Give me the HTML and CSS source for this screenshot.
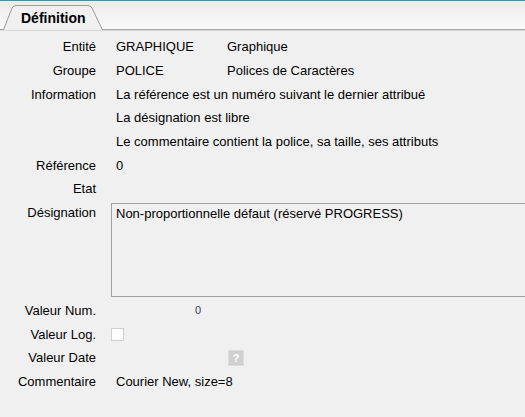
FILE: index.html
```html
<!DOCTYPE html>
<html lang="fr">
<head>
  <meta charset="UTF-8" />
  <title>Définition</title>
  <link rel="stylesheet" href="styles.css">
</head>
<body>
  <div class="tabs">
    <div class="tab">
      <svg class="tab-shape" width="104" height="26" viewBox="0 0 104 26">
        <path d="M2.5 26 L11 4 Q12.5 1.5 15 1.5 L87 1.5 Q89.5 1.5 91 4 L101.5 26" fill="#f0f0f0" stroke="#9a9a9a" stroke-width="1"/>
      </svg>
      <span class="tab-label">Définition</span>
    </div>
  </div>

  <div class="form">
    <div class="label">Entité</div>
    <div class="value">GRAPHIQUE</div>
    <div class="value">Graphique</div>

    <div class="label">Groupe</div>
    <div class="value">POLICE</div>
    <div class="value">Polices de Caractères</div>

    <div class="label">Information</div>
    <div class="value wide">La référence est un numéro suivant le dernier attribué</div>
    <div class="label"></div>
    <div class="value wide">La désignation est libre</div>
    <div class="label"></div>
    <div class="value wide">Le commentaire contient la police, sa taille, ses attributs</div>

    <div class="label">Référence</div>
    <div class="value wide">0</div>

    <div class="label">Etat</div>
    <div class="value wide"></div>

    <div class="label top">Désignation</div>
    <div class="memo">Non-proportionnelle défaut (réservé PROGRESS)</div>

    <div class="label">Valeur Num.</div>
    <div class="value num">0</div>
    <div class="value"></div>

    <div class="label">Valeur Log.</div>
    <div class="value"><span class="check"></span></div>
    <div class="value"></div>

    <div class="label">Valeur Date</div>
    <div class="value"></div>
    <div class="value"><span class="help">?</span></div>

    <div class="label">Commentaire</div>
    <div class="value wide">Courier New, size=8</div>
  </div>
</body>
</html>
```

FILE: styles.css
```css
body {
  margin: 0;
  background: #f0f0f0;
  font-family: 'Liberation Sans', Arial, sans-serif;
  font-size: 13px;
  color: #000;
  overflow: hidden;
}
.tabs {
  height: 28px;
  border-top: 1px solid #1ea2b4;
  border-bottom: 1px solid #a8a8a8;
  box-shadow: 0 1px 0 #d8d8d8;
  background: linear-gradient(#ececec, #f9f9f9);
  padding-left: 1px;
}
.tab {
  position: relative;
  width: 104px;
  height: 26px;
  margin-top: 3px;
}
.tab-shape {
  position: absolute;
  left: 0;
  top: 0;
}
.tab-label {
  position: relative;
  display: block;
  padding: 6px 0 0 20px;
  font-weight: bold;
  font-size: 14px;
}
.form {
  display: grid;
  grid-template-columns: 96px 111px 1fr;
  grid-auto-rows: minmax(23.67px, auto);
  align-items: center;
  padding-top: 5px;
}
.label {
  text-align: right;
  white-space: nowrap;
}
.label.top {
  align-self: start;
  line-height: 23.67px;
}
.value {
  padding-left: 20px;
  white-space: nowrap;
}
.value.wide {
  grid-column: 2 / 4;
}
.value.num {
  text-align: right;
  padding-right: 6px;
  font-size: 11px;
  color: #3a3a58;
}
.memo {
  grid-column: 2 / 4;
  height: 94px;
  margin: 2px -10px 2px 15px;
  box-sizing: border-box;
  align-self: start;
  border: 1px solid #a0a0a0;
  border-color: #a0a0a0 #d8d8d8 #a0a0a0 #a0a0a0;
  padding: 0 4px;
  line-height: 20px;
}
.check {
  display: block;
  width: 11px;
  height: 11px;
  margin-left: -5px;
  background: #fff;
  border: 1px solid #cfcfcf;
}
.help {
  display: block;
  width: 16px;
  height: 16px;
  margin-left: 1px;
  box-sizing: border-box;
  background: #cfcfcf;
  border: 1px solid #dcdcdc;
  color: #fff;
  font-weight: bold;
  font-size: 11px;
  line-height: 14px;
  text-align: center;
}
```
